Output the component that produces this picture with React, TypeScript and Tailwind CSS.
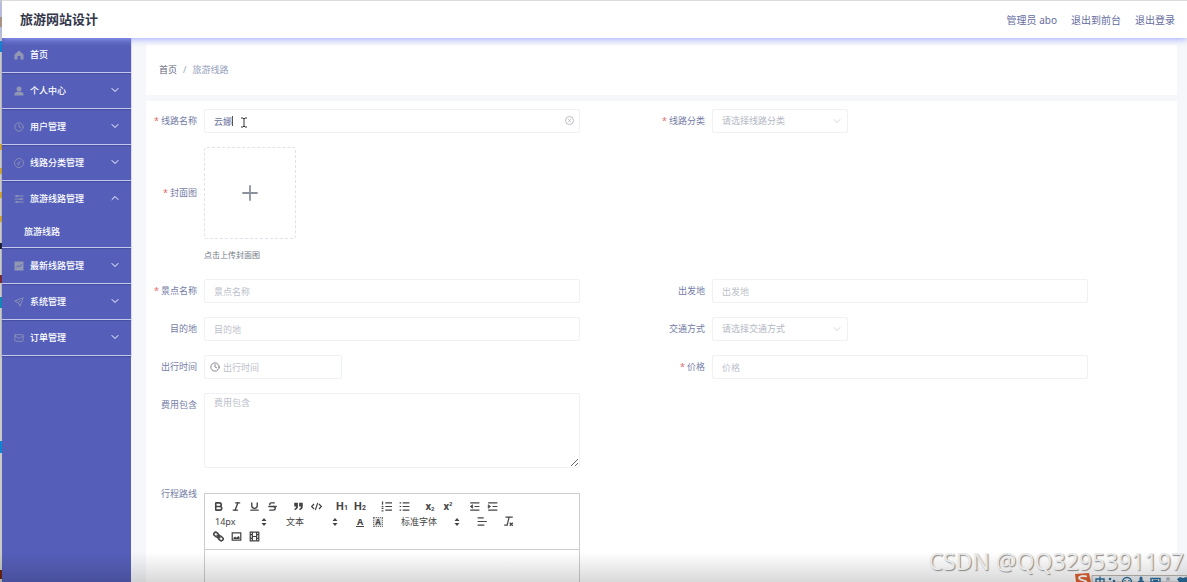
import { useState } from 'react';
import type { ReactNode } from 'react';
import {
  Bold,
  ChevronDown,
  ChevronUp,
  Clock,
  Italic,
  Mail,
  Plus,
  Strikethrough,
  Underline,
} from 'lucide-react';

const ICON = 'h-[10px] w-[10px] shrink-0 text-[#9297b4]';

const HomeIcon = () => (
  <svg viewBox="0 0 20 20" className={ICON} fill="currentColor">
    <path d="M10 1 1 9v10h6v-7h6v7h6V9z" />
  </svg>
);

const UserIcon = () => (
  <svg viewBox="0 0 20 20" className={ICON} fill="currentColor">
    <circle cx="10" cy="6" r="5" />
    <path d="M1 19v-3c0-2 2-4 5-4h8c3 0 5 2 5 4v3z" />
  </svg>
);

const GaugeIcon = () => (
  <svg viewBox="0 0 20 20" className={ICON} fill="none" stroke="currentColor" strokeWidth="1.6">
    <circle cx="10" cy="10" r="9" />
    <path d="M13.5 6 9 10.5" />
    <circle cx="9" cy="11.5" r="1.6" />
  </svg>
);

const SlidersIcon = () => (
  <svg viewBox="0 0 20 20" className={ICON} fill="none" stroke="currentColor" strokeWidth="1.8">
    <path d="M1 4h18M1 10h18M1 16h18" />
    <path d="M6 2v4M14 8v4M6 14v4" strokeWidth="3" />
  </svg>
);

const ChartIcon = () => (
  <svg viewBox="0 0 20 20" className={ICON}>
    <rect x="1" y="1" width="18" height="18" rx="1" fill="currentColor" />
    <path d="m4 13 4-4 3 3 5-6" fill="none" stroke="#555fb9" strokeWidth="1.8" />
  </svg>
);

const SendIcon = () => (
  <svg viewBox="0 0 20 20" className={ICON} fill="none" stroke="currentColor" strokeWidth="1.7" strokeLinejoin="round">
    <path d="M18.5 1.5 1.5 8l7 3.5L12 18.5z" />
    <path d="m8.5 11.5 4-4" />
  </svg>
);

const menus = [
  { label: '首页', icon: <HomeIcon />, leaf: true },
  { label: '个人中心', icon: <UserIcon /> },
  { label: '用户管理', icon: <Clock className={ICON} strokeWidth={2} /> },
  { label: '线路分类管理', icon: <GaugeIcon /> },
  { label: '旅游线路管理', icon: <SlidersIcon />, children: ['旅游线路'] },
  { label: '最新线路管理', icon: <ChartIcon /> },
  { label: '系统管理', icon: <SendIcon /> },
  { label: '订单管理', icon: <Mail className={ICON} strokeWidth={2} /> },
];

function Sidebar() {
  return (
    <nav className="w-[129px] shrink-0 bg-[#555fb9] text-[9px] font-medium text-white">
      <ul>
        {menus.map((m) => (
          <li key={m.label} className="border-b border-[#c3c7ee] shadow-[0_1px_1px_#4750a4]">
            <button
              type="button"
              className={`flex w-full items-center gap-[6px] pr-[10px] pl-[12px] ${m.leaf ? 'h-[34px]' : 'h-[35px]'}`}
            >
              {m.icon}
              <span className="grow text-left">{m.label}</span>
              {!m.leaf && (
                <span className="pb-[2px]">
                  {m.children ? <ChevronUp className="h-3 w-3" /> : <ChevronDown className="h-3 w-3" />}
                </span>
              )}
            </button>
            {m.children?.map((c) => (
              <a key={c} href="#" className="flex h-[31px] items-center pl-[22px]">
                {c}
              </a>
            ))}
          </li>
        ))}
      </ul>
    </nav>
  );
}

function Field({
  id,
  label,
  required,
  top,
  children,
}: {
  id: string;
  label: string;
  required?: boolean;
  top?: string;
  children: ReactNode;
}) {
  return (
    <div className="flex gap-[7px] pr-[82px]">
      <label htmlFor={id} className={`w-[43px] shrink-0 text-right leading-6 whitespace-nowrap text-[#747ca6] ${top ?? ''}`}>
        {required && <span className="mr-[2px] text-[#e06c6c]">*</span>}
        {label}
      </label>
      <div className="min-w-0 grow">{children}</div>
    </div>
  );
}

const BOX = 'rounded-[2px] border border-[#eff1f5] bg-white text-[#6a7199] outline-none placeholder:text-[#bcc0ca]';

function TextInput({ id, placeholder }: { id: string; placeholder: string }) {
  return <input id={id} placeholder={placeholder} className={`block h-6 w-full px-[9px] ${BOX}`} />;
}

function SelectInput({ id, placeholder }: { id: string; placeholder: string }) {
  return (
    <div className="relative w-[136px]">
      <select id={id} className={`block h-6 w-full appearance-none px-[9px] ${BOX} text-[#b4b8c4]`}>
        <option>{placeholder}</option>
      </select>
      <ChevronDown className="pointer-events-none absolute top-[6px] right-[5px] h-3 w-3 text-[#c6cad4]" strokeWidth={1.5} />
    </div>
  );
}

function Tool({ title, children }: { title: string; children: ReactNode }) {
  return (
    <button type="button" title={title} className="flex h-[15px] w-[18px] items-center justify-center leading-none">
      {children}
    </button>
  );
}

function Picker({ label, width }: { label: string; width: string }) {
  return (
    <button type="button" className={`flex h-[15px] items-center justify-between pr-[5px] pl-[6px] text-[9px] ${width}`}>
      {label}
      <svg viewBox="0 0 6 8" className="h-2 w-[6px]" fill="currentColor">
        <path d="M3 0 5.5 3h-5zM3 8 .5 5h5z" />
      </svg>
    </button>
  );
}

const Stroke = ({ d, children }: { d: string; children?: ReactNode }) => (
  <svg viewBox="0 0 18 18" className="h-[11px] w-[11px]" fill="none" stroke="currentColor" strokeWidth="2">
    <path d={d} />
    {children}
  </svg>
);

const LUCIDE = 'h-[11px] w-[11px]';

function Editor() {
  return (
    <div className="mt-[11px] border border-[#ccc] text-[#444]">
      <div className="border-b border-[#ccc] px-1 py-[5px]">
        <div className="flex gap-2">
          <div className="flex">
            <Tool title="加粗"><Bold className={LUCIDE} strokeWidth={3.5} /></Tool>
            <Tool title="斜体"><Italic className={LUCIDE} strokeWidth={3} /></Tool>
            <Tool title="下划线"><Underline className={LUCIDE} strokeWidth={3} /></Tool>
            <Tool title="删除线"><Strikethrough className={LUCIDE} strokeWidth={3} /></Tool>
          </div>
          <div className="flex">
            <Tool title="引用">
              <svg viewBox="0 0 18 18" className="h-[11px] w-[11px]" fill="currentColor">
                <path d="M2 3h6v6c0 3-2 5-5 6l-1-2c2-1 3-2 3-4H2zM10 3h6v6c0 3-2 5-5 6l-1-2c2-1 3-2 3-4h-3z" />
              </svg>
            </Tool>
            <Tool title="代码"><Stroke d="m5 5-4 4 4 4M13 5l4 4-4 4M11 3 7 15" /></Tool>
          </div>
          <div className="flex font-['Roboto',sans-serif] text-[11px] font-bold">
            <Tool title="标题1">H<span className="pt-[3px] text-[7px]">1</span></Tool>
            <Tool title="标题2">H<span className="pt-[3px] text-[7px]">2</span></Tool>
          </div>
          <div className="flex">
            <Tool title="有序列表">
              <Stroke d="M7 3h11M7 9h11M7 15h11M2.5 1v5M1 9h3M1 12h3M1 16h3" />
            </Tool>
            <Tool title="无序列表"><Stroke d="M6 3h11M6 9h11M6 15h11M1 3h2.5M1 9h2.5M1 15h2.5" /></Tool>
          </div>
          <div className="flex font-['Roboto',sans-serif] text-[11px] font-bold">
            <Tool title="下标">x<span className="pt-[5px] text-[6px]">2</span></Tool>
            <Tool title="上标">x<span className="pb-[5px] text-[6px]">2</span></Tool>
          </div>
          <div className="flex">
            <Tool title="减少缩进">
              <Stroke d="M2 3h15M9 9h8M2 15h15"><path d="M6 6v6L2 9z" fill="currentColor" strokeWidth="1" /></Stroke>
            </Tool>
            <Tool title="增加缩进">
              <Stroke d="M2 3h15M9 9h8M2 15h15"><path d="M2 6v6l4-3z" fill="currentColor" strokeWidth="1" /></Stroke>
            </Tool>
          </div>
        </div>
        <div className="flex gap-2">
          <Picker label="14px" width="w-[63px]" />
          <Picker label="文本" width="w-[63px]" />
          <div className="flex text-[9px] font-bold">
            <Tool title="文字颜色"><span className="border-b border-[#444] px-px">A</span></Tool>
            <Tool title="背景颜色"><span className="border border-dotted border-[#777] bg-[#ddd] px-px text-[8px]">A</span></Tool>
          </div>
          <Picker label="标准字体" width="w-[70px]" />
          <Tool title="对齐"><Stroke d="M1 3h10M1 9h15M1 15h11" /></Tool>
          <Tool title="清除格式"><Stroke d="M4 2h12M10 2 7 14M2 15h6M11 11l5 5M16 11l-5 5" /></Tool>
        </div>
        <div className="flex">
          <Tool title="链接">
            <svg viewBox="0 0 18 18" className="h-[11px] w-[11px]" fill="none" stroke="currentColor" strokeWidth="2.5">
              <rect x="1" y="3" width="9" height="6" rx="3" transform="rotate(40 5.5 6)" />
              <rect x="8" y="9" width="9" height="6" rx="3" transform="rotate(40 12.5 12)" />
              <path d="m6 6 6 6" />
            </svg>
          </Tool>
          <Tool title="图片">
            <Stroke d="M2 3h14v12H2z"><path d="M4 13V11l3-2 2 2 3-3 2 2v3z" fill="currentColor" strokeWidth="0" /></Stroke>
          </Tool>
          <Tool title="视频"><Stroke d="M2 2h14v14H2zM5.5 2v14M12.5 2v14M5 9h8M2 6h3M2 12h3M13 6h3M13 12h3" /></Tool>
        </div>
      </div>
      <div id="route" contentEditable className="h-[120px] outline-none" />
    </div>
  );
}

function RouteForm() {
  const [name, setName] = useState('云娜');

  return (
    <form className="flex grow flex-col gap-[14px] bg-white pt-2 pr-[7px] pl-2 text-[9px]">
      <div className="grid grid-cols-2">
        <Field id="name" label="线路名称" required>
          <div className="relative">
            <input
              id="name"
              value={name}
              onChange={(e) => setName(e.target.value)}
              className={`block h-6 w-full px-[9px] ${BOX}`}
            />
            <span className="absolute top-[7px] left-7 h-[10px] w-px bg-[#555]" />
            <svg viewBox="0 0 6 10" className="absolute top-2 left-[37px] h-[11px] w-[6px]" fill="none" stroke="#333">
              <path d="M0 .5h2l1 1 1-1h2M3 1v8M0 9.5h2l1-1 1 1h2" />
            </svg>
            <button type="button" title="清空" className="absolute top-[7px] right-[6px]">
              <svg viewBox="0 0 18 18" className="h-[9px] w-[9px] text-[#a9adb8]" fill="none" stroke="currentColor" strokeWidth="1.6">
                <circle cx="9" cy="9" r="8" />
                <path d="m6.5 6.5 5 5M11.5 6.5l-5 5" />
              </svg>
            </button>
          </div>
        </Field>
        <Field id="type" label="线路分类" required>
          <SelectInput id="type" placeholder="请选择线路分类" />
        </Field>
      </div>
      <Field id="cover" label="封面图" required top="pt-[34px]">
        <button
          id="cover"
          type="button"
          className="flex h-[92px] w-[92px] items-center justify-center rounded-[3px] border border-dashed border-[#dfe2ea]"
        >
          <Plus className="h-6 w-6 text-[#8c939d]" strokeWidth={1.8} />
        </button>
        <p className="mt-[7px] mb-px text-[8px] leading-[18px] text-[#737986]">点击上传封面图</p>
      </Field>
      <div className="grid grid-cols-2 gap-y-[14px]">
        <Field id="spot" label="景点名称" required>
          <TextInput id="spot" placeholder="景点名称" />
        </Field>
        <Field id="from" label="出发地">
          <TextInput id="from" placeholder="出发地" />
        </Field>
        <Field id="to" label="目的地">
          <TextInput id="to" placeholder="目的地" />
        </Field>
        <Field id="traffic" label="交通方式">
          <SelectInput id="traffic" placeholder="请选择交通方式" />
        </Field>
        <Field id="date" label="出行时间">
          <div className="relative w-[138px]">
            <Clock className="absolute top-[7px] left-[6px] h-[10px] w-[10px] text-[#6f737c]" strokeWidth={2} />
            <input id="date" placeholder="出行时间" className={`block h-6 w-full pl-[18px] ${BOX}`} />
          </div>
        </Field>
        <Field id="price" label="价格" required>
          <TextInput id="price" placeholder="价格" />
        </Field>
        <Field id="cost" label="费用包含">
          <textarea
            id="cost"
            placeholder="费用包含"
            className={`block h-[75px] w-full resize-y px-[9px] py-[3px] leading-[12px] ${BOX}`}
          />
        </Field>
      </div>
      <div className="grid grid-cols-2">
        <Field id="route" label="行程路线">
          <Editor />
        </Field>
      </div>
    </form>
  );
}

// slice of the desktop left of the browser window: [height class, colour class]
const strip = [
  ['h-[17px]', 'bg-[#c9c9c5]'],
  ['h-[10px]', 'bg-[#b08a35]'],
  ['h-[14px]', 'bg-[#c9c9c5]'],
  ['h-[11px]', 'bg-[#0f82d0]'],
  ['h-[92px]', 'bg-[#c9c9c5]'],
  ['h-[6px]', 'bg-[#d3a52f]'],
  ['h-[18px]', 'bg-[#c9c9c5]'],
  ['h-[6px]', 'bg-[#d3a52f]'],
  ['h-[18px]', 'bg-[#c9c9c5]'],
  ['h-[6px]', 'bg-[#d3a52f]'],
  ['h-[18px]', 'bg-[#c9c9c5]'],
  ['h-[6px]', 'bg-[#d3a52f]'],
  ['h-[21px]', 'bg-[#c9c9c5]'],
  ['h-[6px]', 'bg-[#1d1d2c]'],
  ['h-[26px]', 'bg-[#c9c9c5]'],
  ['h-[8px]', 'bg-[#7c2626]'],
  ['h-[14px]', 'bg-[#c9c9c5]'],
  ['h-[11px]', 'bg-[#1089b5]'],
  ['h-[133px]', 'bg-[#c9c9c5]'],
  ['h-[12px]', 'bg-[#0f82d0]'],
  ['h-[117px]', 'bg-[#c9c9c5]'],
  ['h-[9px]', 'bg-[#6b2410]'],
  ['grow', 'bg-[#c9c9c5]'],
];

function InputMethodBar() {
  return (
    <div className="absolute right-0 bottom-0 flex h-[9px] w-[112px] items-start overflow-hidden">
      <svg viewBox="0 0 112 9" className="h-[9px] w-full" fill="none">
        <path d="M17 2.5h95V9H17z" fill="#eef1f5" stroke="#b9b4b0" />
        <path d="m0 1 14-1 2 9H1z" fill="#e0622f" />
        <path d="M12 3.5c-4-1-8-.5-8 1.5s5 2 8 4" stroke="#fff" strokeWidth="1.8" />
        <g stroke="#2a6c9c" strokeWidth="1.4">
          <path d="M21 9V6h8v3M25 3.5V9" />
          <circle cx="52" cy="9" r="4.5" />
          <path d="M50 7v1M54 7v1" />
          <path d="M63 8.5h6" />
          <path d="M76 5.5h9V9h-9zM78 7.5h5" />
        </g>
        <g fill="#2a6c9c">
          <circle cx="35" cy="6" r="1.3" />
          <circle cx="39" cy="8" r="1.3" />
          <rect x="64.5" y="3.5" width="3" height="6" rx="1.5" />
          <path d="m102 6 3-2 3 1 3-1 1 1v4h-8z" />
        </g>
        <circle cx="93" cy="6" r="2" fill="#b4bac4" />
      </svg>
    </div>
  );
}

export default function App() {
  return (
    <div className="relative flex h-screen overflow-hidden bg-[#f5f7fa] font-['Noto_Sans','Noto_Sans_CJK_SC',sans-serif]">
      <div className="flex w-[2px] shrink-0 flex-col">
        {strip.map(([height, colour], i) => (
          <div key={i} className={`${height} ${colour}`} />
        ))}
      </div>
      <div className="flex min-w-0 grow flex-col">
        <header className="relative z-10 flex h-[38px] shrink-0 items-center justify-between border-t border-[#dcdcdc] bg-white pr-3 pl-[18px] pt-px shadow-[0_1px_7px_#9ca6ff]">
          <h1 className="text-[13px] font-bold text-[#33374a]">旅游网站设计</h1>
          <div className="flex gap-[14px] text-[10px] text-[#666ca0]">
            <span>管理员 abo</span>
            <a href="#">退出到前台</a>
            <a href="#">退出登录</a>
          </div>
        </header>
        <div className="flex min-h-0 grow">
          <Sidebar />
          <main className="flex min-w-0 grow flex-col gap-[6px] pt-[7px] pr-[10px] pl-[15px]">
            <div className="flex h-[50px] shrink-0 items-center gap-[6px] bg-white pl-[13px] text-[9px] text-[#97a2bd]">
              <a href="#" className="text-[#5d6378]">首页</a>
              <span>/</span>
              <span>旅游线路</span>
            </div>
            <RouteForm />
          </main>
        </div>
      </div>
      <div className="pointer-events-none absolute inset-x-0 bottom-0 z-20 h-[30px] bg-linear-to-t from-black/15 to-transparent" />
      <InputMethodBar />
      <p className="absolute right-[3px] bottom-[5px] z-30 font-['Noto_Sans',sans-serif] text-[23px] leading-8 whitespace-nowrap text-[#e8e8e8] [text-shadow:1px_1px_1px_#888]">
        CSDN @QQ3295391197
      </p>
    </div>
  );
}
